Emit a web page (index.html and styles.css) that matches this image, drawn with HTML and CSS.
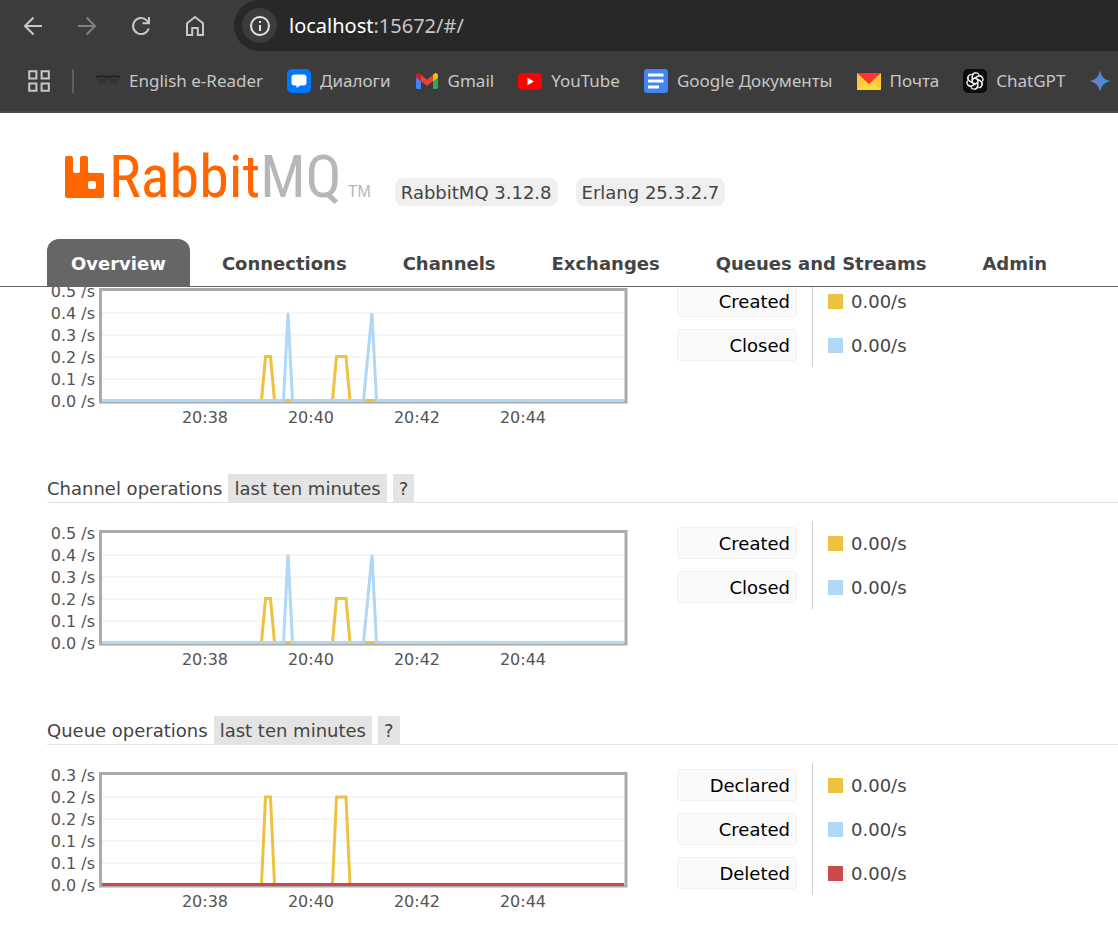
FILE: index.html
```html
<!DOCTYPE html>
<html lang="en">
<head>
<meta charset="utf-8">
<title>RabbitMQ Management</title>
<link rel="stylesheet" href="styles.css">
</head>
<body>
<header class="browser">
  <div class="toolbar">
    <button class="nav-button" aria-label="Back"><svg width="20" height="20" viewBox="0 0 20 20"><path d="M19 10H2M10.500 1.500 2 10l8.500 8.500"/></svg></button>
    <button class="nav-button nav-disabled" aria-label="Forward"><svg width="20" height="20" viewBox="0 0 20 20"><path d="M1 10h17M9.500 1.500 18 10l-8.500 8.500"/></svg></button>
    <button class="nav-button" aria-label="Reload"><svg width="20" height="20" viewBox="0 0 20 20"><path d="M17.700 12.500A8 8 0 1 1 16 4.700L18 7M18 1v6.200h-6.500"/></svg></button>
    <button class="nav-button" aria-label="Home"><svg width="20" height="22" viewBox="0 0 20 22"><path d="M2 8.200 10 2l8 6.200V20h-5.200v-7H7.200v7H2z"/></svg></button>
    <div class="address">
      <button class="site-info" aria-label="Site information"><svg width="20" height="20" viewBox="0 0 20 20"><circle cx="10" cy="10" r="9"/><path d="M10 9v6M10 5v2"/></svg></button>
      <div class="url" role="textbox" contenteditable="true" spellcheck="false" aria-label="Address"><span class="host">localhost</span>:15672/#/</div>
    </div>
  </div>
  <nav class="bookmarks" aria-label="Bookmarks">
    <button class="apps" aria-label="Tab groups"><svg width="22" height="22" viewBox="0 0 22 22"><path d="M1.200 1.200h7.200v7.200H1.200zM13.600 1.200h7.200v7.200h-7.200zM1.200 13.600h7.200v7.200H1.200zM13.600 13.600h7.200v7.200h-7.200z"/></svg></button>
    <span class="separator"></span>
    <a href="#" class="bookmark"><svg width="24" height="24" viewBox="0 0 24 24"><path d="M0 7.500h4l2-.5 4 .5 2 .5 2-.5 4-.5 2 .5h4" fill="none" stroke="#1c1c1c" stroke-width="1.400"/><path d="M3 8q-1 6.500 3.500 6.500Q11 14.500 11 8zM13 8q0 6.500 4.500 6.500Q22 14.500 21 8z" fill="#363636" stroke="#303030"/></svg><span>English e-Reader</span></a>
    <a href="#" class="bookmark"><svg width="24" height="24" viewBox="0 0 24 24"><rect width="24" height="24" rx="5" fill="#07f"/><path d="M7.500 5.500h9a3 3 0 0 1 3 3v5a3 3 0 0 1-3 3h-3L9.500 19v-2.500h-2a3 3 0 0 1-3-3v-5a3 3 0 0 1 3-3z" fill="#fff"/></svg><span>Диалоги</span></a>
    <a href="#" class="bookmark"><svg width="24" height="24" viewBox="0 0 24 24"><path d="M1 7l5 4v9H2.500A1.500 1.500 0 0 1 1 18.500z" fill="#4285f4"/><path d="M23 7l-5 4v9h3.500a1.500 1.500 0 0 0 1.500-1.500z" fill="#34a853"/><path d="M6 6l6 4.700L18 6v6.300l-6 4.500-6-4.500z" fill="#ea4335"/><path d="M1 6.500C1 4 3.500 3.300 5 4.800L6 6v6.300L1 8.500z" fill="#c5221f"/><path d="M23 6.500C23 4 20.500 3.300 19 4.800L18 6v6.300l5-3.800z" fill="#fbbc04"/></svg><span>Gmail</span></a>
    <a href="#" class="bookmark"><svg width="24" height="24" viewBox="0 0 24 24"><rect y="4" width="24" height="17" rx="4" fill="red"/><path d="M9.500 8.800v7.400l6.500-3.700z" fill="#fff"/></svg><span>YouTube</span></a>
    <a href="#" class="bookmark"><svg width="24" height="24" viewBox="0 0 24 24"><rect width="24" height="24" rx="3" fill="#4285f4"/><path d="M4 6h15.500M4 12h15.500M4 18h11" stroke="#fff" stroke-width="3"/></svg><span>Google Документы</span></a>
    <a href="#" class="bookmark"><svg width="24" height="24" viewBox="0 0 24 24"><path d="M0 4h24v17H0z" fill="#ffc83a"/><path d="M0 21l9-8h6l9 8z" fill="#ffd93b"/><path d="M0 4h24L12 15z" fill="#f33"/></svg><span>Почта</span></a>
    <a href="#" class="bookmark"><svg width="24" height="24" viewBox="0 0 24 24"><rect width="24" height="24" rx="5" fill="#0d0d0d"/><g fill="none" stroke="#eee" stroke-width="1.300"><path id="petal" d="M9.300 13.600V7.200a3.600 3.600 0 0 1 6.800-1.400M9.300 10.400l5.400-3.100a3.600 3.600 0 0 1 4.600 1"/><use href="#petal" transform="rotate(60 12 12)"/><use href="#petal" transform="rotate(120 12 12)"/><use href="#petal" transform="rotate(180 12 12)"/><use href="#petal" transform="rotate(240 12 12)"/><use href="#petal" transform="rotate(300 12 12)"/></g></svg><span>ChatGPT</span></a>
    <a href="#" class="bookmark" aria-label="Gemini"><svg width="24" height="24" viewBox="0 0 24 24"><defs><linearGradient id="spark"><stop offset="0" stop-color="#9672bd"/><stop offset=".5" stop-color="#5686d2"/><stop offset="1" stop-color="#1ba1e3"/></linearGradient></defs><path d="M11 1.500Q12.500 10.500 21.500 12 12.500 13.500 11 22.500 9.500 13.500 .5 12 9.500 10.500 11 1.500z" fill="url(#spark)"/></svg></a>
  </nav>
</header>

<div class="page">
  <div class="brand">
    <a href="#" class="logo" aria-label="RabbitMQ">
      <svg width="40" height="42" viewBox="0 0 40 42"><path fill="#f60" fill-rule="evenodd" d="M2 0h4q2 0 2 2v13q0 2 2 2h3q2 0 2-2V2q0-2 2-2h4q2 0 2 2v13q0 2 2 2h12q2 0 2 2v21q0 2-2 2H2q-2 0-2-2V2q0-2 2-2zM25 25q-2 0-2 2v4q0 2 2 2h4q2 0 2-2v-4q0-2-2-2z"/></svg>
      <span class="wordmark">Rabbit<span class="mq">MQ</span></span><span class="tm">TM</span>
    </a>
    <span class="version">RabbitMQ 3.12.8</span>
    <span class="version">Erlang 25.3.2.7</span>
  </div>
  <nav class="tabs" aria-label="Main">
    <a href="#" class="tab selected">Overview</a>
    <a href="#" class="tab">Connections</a>
    <a href="#" class="tab">Channels</a>
    <a href="#" class="tab">Exchanges</a>
    <a href="#" class="tab">Queues and Streams</a>
    <a href="#" class="tab">Admin</a>
  </nav>
  <main class="content">
    <section class="stats scrolled">
      <div class="chart-row">
        <div class="chart">
          <div class="y-axis"><span>0.5 /s</span><span>0.4 /s</span><span>0.3 /s</span><span>0.2 /s</span><span>0.1 /s</span><span>0.0 /s</span></div>
          <div class="plot-area">
            <svg class="plot" width="529" height="116" viewBox="0 0 529 116"><g id="frame"><path class="grid" d="M3 25h522M3 47h522M3 69h522M3 91h522"/><path class="border" d="M1.500 1.500h525.500v112.500H1.500z"/></g><g id="two-series"><path class="line yellow" d="M3 112.500H162.500L166.500 68.500H171.500L175.500 112.500H233.500L237.500 68.500H247L251 112.500H525"/><path class="line blue" d="M3 112.500H184.500L189 25L193.500 112.500H264.500L273 25L277.500 112.500H525"/><path class="line yellow" d="M187 112.500h4M266 112.500h9"/></g></svg>
            <div class="x-axis"><span>20:38</span><span>20:40</span><span>20:42</span><span>20:44</span></div>
          </div>
        </div>
        <table class="legend">
          <tr><th scope="row"><button>Created</button></th><td><span class="swatch s-yellow"></span>0.00/s</td></tr>
          <tr><th scope="row"><button>Closed</button></th><td><span class="swatch s-blue"></span>0.00/s</td></tr>
        </table>
      </div>
    </section>
    <section class="stats">
      <h3 class="title">Channel operations <button class="chip">last ten minutes</button><button class="chip">?</button></h3>
      <div class="chart-row">
        <div class="chart">
          <div class="y-axis"><span>0.5 /s</span><span>0.4 /s</span><span>0.3 /s</span><span>0.2 /s</span><span>0.1 /s</span><span>0.0 /s</span></div>
          <div class="plot-area">
            <svg class="plot" width="529" height="116" viewBox="0 0 529 116"><use href="#frame"/><use href="#two-series"/></svg>
            <div class="x-axis"><span>20:38</span><span>20:40</span><span>20:42</span><span>20:44</span></div>
          </div>
        </div>
        <table class="legend">
          <tr><th scope="row"><button>Created</button></th><td><span class="swatch s-yellow"></span>0.00/s</td></tr>
          <tr><th scope="row"><button>Closed</button></th><td><span class="swatch s-blue"></span>0.00/s</td></tr>
        </table>
      </div>
    </section>
    <section class="stats">
      <h3 class="title">Queue operations <button class="chip">last ten minutes</button><button class="chip">?</button></h3>
      <div class="chart-row">
        <div class="chart">
          <div class="y-axis"><span>0.3 /s</span><span>0.2 /s</span><span>0.2 /s</span><span>0.1 /s</span><span>0.1 /s</span><span>0.0 /s</span></div>
          <div class="plot-area">
            <svg class="plot" width="529" height="116" viewBox="0 0 529 116"><use href="#frame"/><path class="line yellow" d="M3 112.500H162.500L166.500 25H171.500L175.500 112.500H233.500L237.500 25H247L251 112.500H525"/><path class="line red" d="M3 112.500H525"/></svg>
            <div class="x-axis"><span>20:38</span><span>20:40</span><span>20:42</span><span>20:44</span></div>
          </div>
        </div>
        <table class="legend">
          <tr><th scope="row"><button>Declared</button></th><td><span class="swatch s-yellow"></span>0.00/s</td></tr>
          <tr><th scope="row"><button>Created</button></th><td><span class="swatch s-blue"></span>0.00/s</td></tr>
          <tr><th scope="row"><button>Deleted</button></th><td><span class="swatch s-red"></span>0.00/s</td></tr>
        </table>
      </div>
    </section>
  </main>
</div>
</body>
</html>
```
FILE: styles.css
```css
* { box-sizing: border-box; }
html, body { height: 100%; }
body {
  margin: 0;
  display: flex;
  flex-direction: column;
  overflow: hidden;
  background: #fff;
  color: #444;
  font: 18px/28px Verdana, "DejaVu Sans", sans-serif;
}
button { border: 0; padding: 0; background: none; color: inherit; font: inherit; cursor: pointer; }
a { color: inherit; text-decoration: none; }
svg { display: block; flex: none; }

/* Browser chrome */
.browser {
  flex: none;
  background: #3c3c3c;
  border-bottom: 2px solid #484848;
  color: #c7c7c7;
  font-family: "Segoe UI", "Noto Sans", "Open Sans", sans-serif;
}
.toolbar { display: flex; align-items: center; height: 51px; padding-left: 6px; }
.nav-button { flex: none; width: 54px; display: flex; justify-content: center; }
.nav-button svg, .apps svg, .site-info svg { fill: none; stroke: currentColor; stroke-width: 2; }
.nav-disabled { color: #808080; }
.address {
  flex: 1;
  display: flex;
  align-items: center;
  gap: 12px;
  height: 51px;
  margin-left: 12px;
  padding-left: 8px;
  border-radius: 26px 0 0 26px;
  background: #282828;
}
.site-info {
  display: flex;
  align-items: center;
  justify-content: center;
  width: 35px;
  height: 35px;
  border-radius: 50%;
  background: #3c3c3c;
  color: #e3e3e3;
}
.url { font-size: 20px; outline: 0; }
.host { color: #fff; }
.bookmarks {
  display: flex;
  align-items: center;
  gap: 24px;
  height: 60px;
  padding-left: 28px;
  overflow: hidden;
  white-space: nowrap;
  font-size: 17px;
}
.apps { flex: none; margin-right: -2px; }
.separator { flex: none; width: 2px; height: 24px; margin-right: -2px; background: #5e5e5e; }
.bookmark { flex: none; display: flex; align-items: center; gap: 9px; }

/* Page header */
.page { flex: 1; min-height: 0; display: flex; flex-direction: column; padding-left: 47px; }
.brand { flex: none; display: flex; align-items: flex-end; gap: 18px; height: 93px; padding-left: 18px; }
.logo { display: flex; align-items: flex-end; gap: 4px; padding-bottom: 8px; margin-right: 6px; }
.wordmark { color: #f60; font: 60px/42px "Roboto Condensed", Roboto, sans-serif; }
.mq, .tm { color: #b7b7b7; }
.tm { margin-left: 2px; font: 16px/12px "Liberation Sans", Arial, sans-serif; }
.version { padding: 1px 6px 0; border-radius: 8px; background: #efefef; line-height: 27px; }
.tabs {
  flex: none;
  display: flex;
  gap: 8px;
  margin-left: -47px;
  padding: 33px 0 0 47px;
  border-bottom: 1px solid #666;
}
.tab { padding: 11px 24px 8px; border-radius: 12px 12px 0 0; font-weight: bold; white-space: nowrap; }
.selected { background: #666; color: #fff; }

/* Statistics */
.content { flex: 1; min-height: 0; overflow: hidden; }
.stats { height: 242px; }
.scrolled { display: flow-root; height: 187px; }
.scrolled .chart-row { margin-top: -8px; }
.title { display: flex; gap: 6px; margin: 0; padding-top: 1px; border-bottom: 1px solid #e4e4e4; font-size: 18px; font-weight: normal; line-height: 27px; }
.chip { margin-top: -1px; padding: 1px 6px 0; background: #e4e4e4; }
.chart-row { display: flex; align-items: flex-start; gap: 49px; margin-top: 18px; }
.chart { display: flex; gap: 4px; padding-top: 2px; color: #545454; font-size: 16px; line-height: 22px; }
.y-axis { display: flex; flex-direction: column; width: 48px; text-align: right; white-space: nowrap; }
.plot-area { padding-top: 7px; }
.grid { stroke: #ececec; }
.border { fill: none; stroke: #aaa; stroke-width: 3; }
.line { fill: none; stroke-width: 3; }
.yellow { stroke: #edc240; }
.blue { stroke: #afd8f8; }
.red { stroke: #cb4b4b; }
.x-axis { display: flex; padding: 3px 0 0 53px; }
.x-axis span { width: 106px; text-align: center; }
.legend { border-collapse: collapse; }
.legend th { height: 44px; padding: 0 15px 0 0; font-weight: normal; }
.legend button {
  display: block;
  width: 120px;
  height: 32px;
  padding: 2px 6px 0;
  border: 1px solid #f0f0f0;
  border-radius: 4px;
  background: #fafafa;
  color: #000;
  text-align: right;
}
.legend td { padding: 2px 0 0 15px; border-left: 1px solid #ccc; }
.swatch { display: inline-block; width: 15px; height: 15px; margin-right: 8px; vertical-align: -1px; }
.s-yellow { background: #edc240; }
.s-blue { background: #afd8f8; }
.s-red { background: #cb4b4b; }
```
